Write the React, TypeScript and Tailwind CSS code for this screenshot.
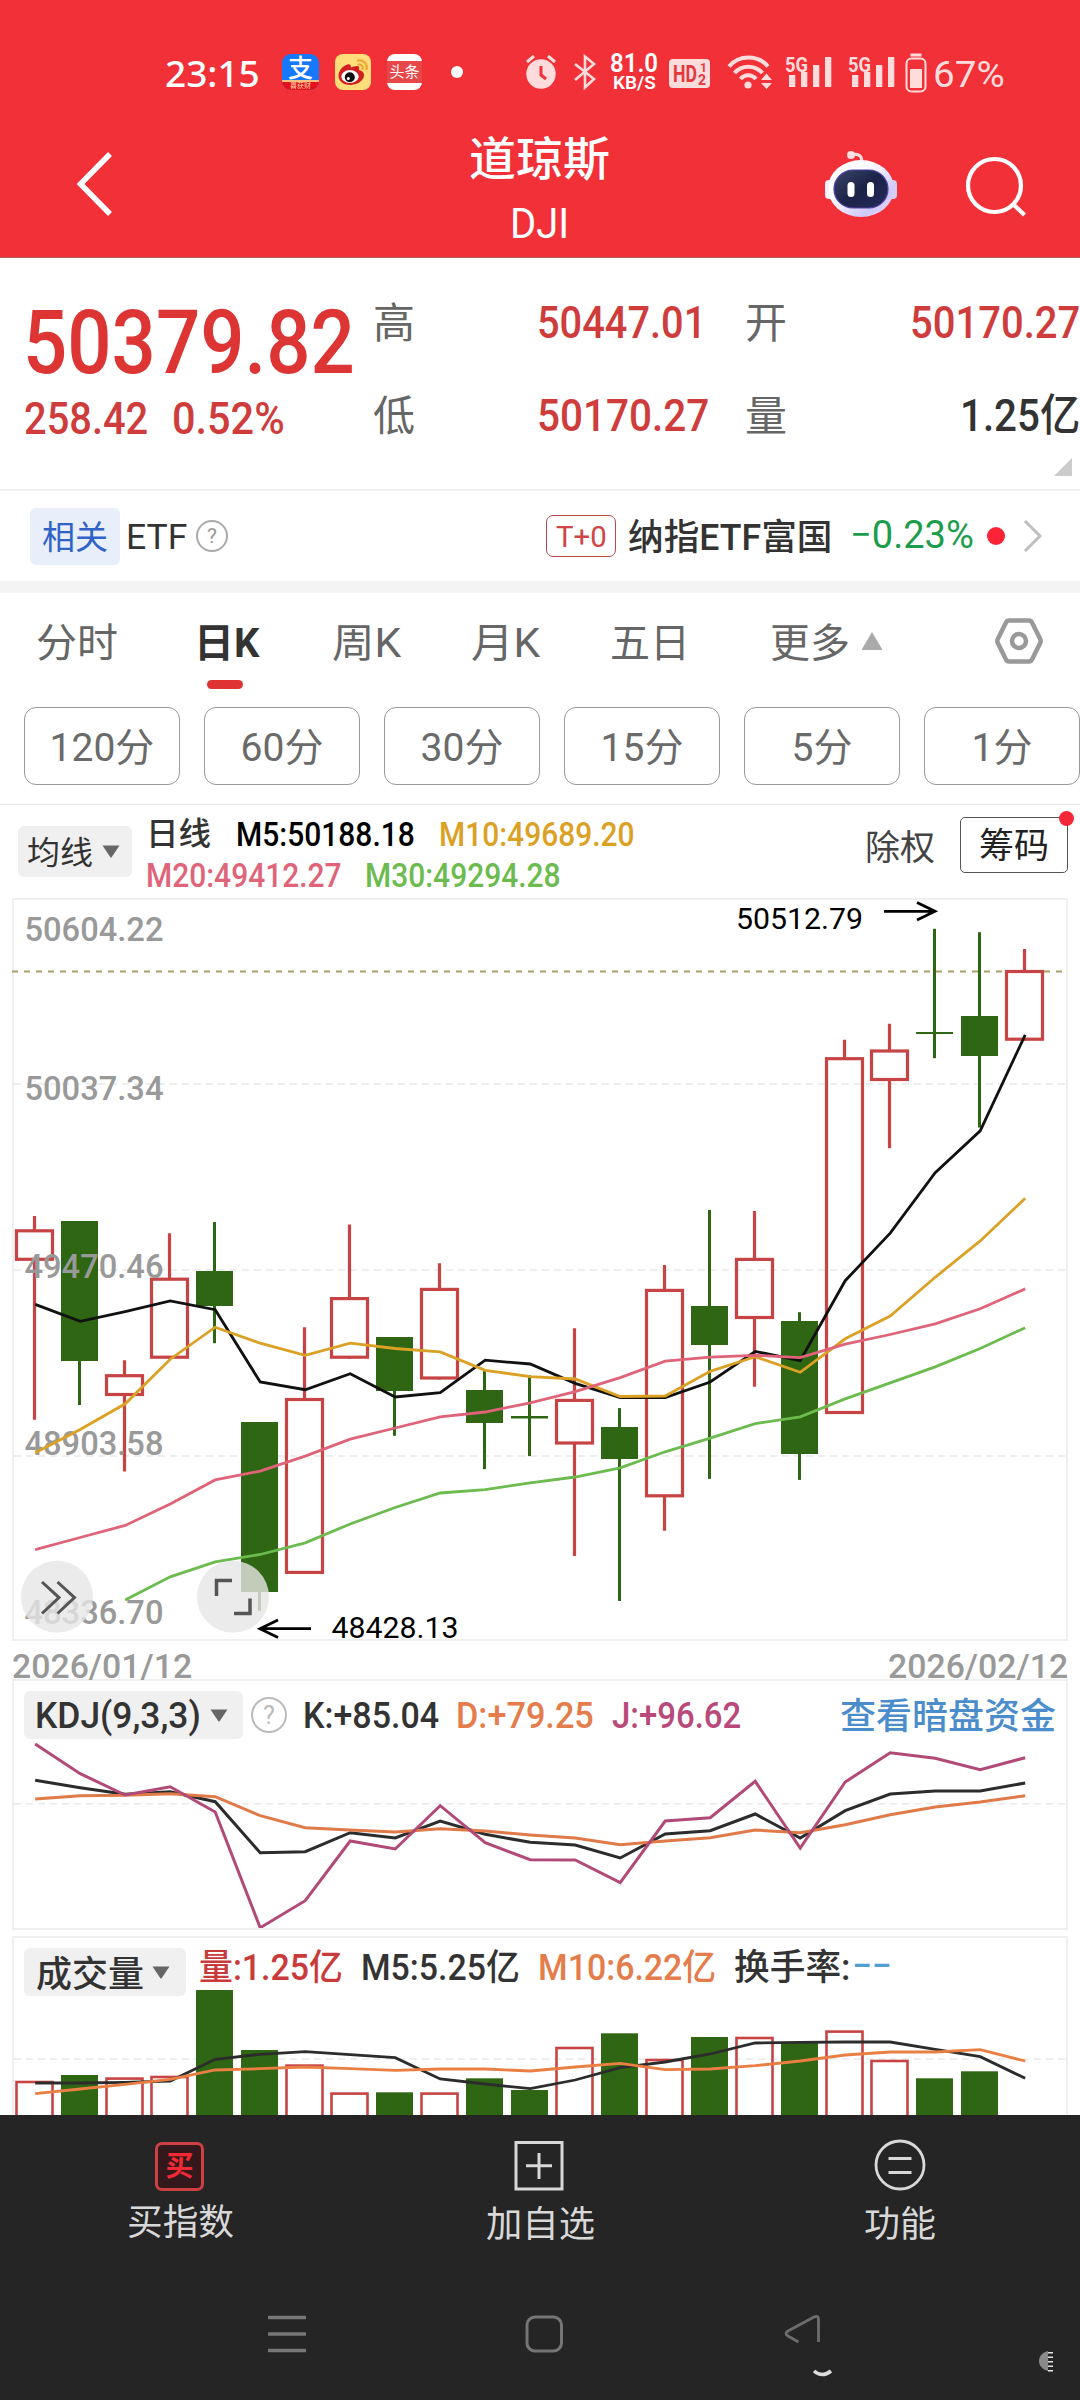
import React, { useLayoutEffect, useRef, useState } from 'react';

interface FitProps {
  w: number;
  className?: string;
  children: React.ReactNode;
}

// Single line label stretched or squeezed to the width of its slot
function Fit({ w, className = '', children }: FitProps) {
  const ref = useRef<HTMLSpanElement>(null);
  const [scale, setScale] = useState(1);

  useLayoutEffect(() => {
    if (ref.current) setScale(w / ref.current.offsetWidth);
  }, [w]);

  return (
    <span className={`inline-block shrink-0 whitespace-nowrap leading-none ${className}`} style={{ width: w }}>
      <span ref={ref} className="inline-block origin-left" style={{ transform: `scaleX(${scale})` }}>
        {children}
      </span>
    </span>
  );
}

const FIRST_X = 34.5;
const STEP = 45;
const RED = '#c64444';
const GREEN = '#2f6613';

interface Candle {
  up: boolean;
  high: number;
  top: number;
  bottom: number;
  low: number;
}

const candles: Candle[] = [
  { up: true, high: 1216, top: 1229.3, bottom: 1260.8, low: 1419.8 },
  { up: false, high: 1221, top: 1221, bottom: 1361, low: 1405 },
  { up: true, high: 1360.2, top: 1374.2, bottom: 1396, low: 1471.6 },
  { up: true, high: 1233.2, top: 1277.7, bottom: 1358.7, low: 1358.7 },
  { up: false, high: 1222, top: 1271, bottom: 1306, low: 1343.2 },
  { up: false, high: 1422, top: 1422, bottom: 1592, low: 1610.7 },
  { up: true, high: 1327.2, top: 1398, bottom: 1573.9, low: 1573.9 },
  { up: true, high: 1224.4, top: 1297.1, bottom: 1358.7, low: 1358.7 },
  { up: false, high: 1337, top: 1337, bottom: 1391, low: 1435.8 },
  { up: true, high: 1263.2, top: 1287.9, bottom: 1379.5, low: 1379.5 },
  { up: false, high: 1370.8, top: 1390, bottom: 1423, low: 1469.2 },
  { up: false, high: 1375.2, top: 1416, bottom: 1418.5, low: 1456.1 },
  { up: true, high: 1328.2, top: 1398.9, bottom: 1444.5, low: 1556 },
  { up: false, high: 1408.1, top: 1427, bottom: 1459, low: 1601 },
  { up: true, high: 1265.1, top: 1288.9, bottom: 1497.3, low: 1530.8 },
  { up: false, high: 1209.9, top: 1306, bottom: 1345, low: 1478.9 },
  { up: true, high: 1210.9, top: 1257.9, bottom: 1319, low: 1386.8 },
  { up: false, high: 1312.2, top: 1321, bottom: 1454, low: 1479.9 },
  { up: true, high: 1039.8, top: 1057.2, bottom: 1414, low: 1414 },
  { up: true, high: 1023.8, top: 1049.5, bottom: 1081, low: 1148.3 },
  { up: false, high: 928.8, top: 1032, bottom: 1034, low: 1058.2 },
  { up: false, high: 932.2, top: 1016, bottom: 1056, low: 1127.5 },
  { up: true, high: 949.1, top: 970, bottom: 1040.7, low: 1040.7 },
];

const ma5 = [1304.4, 1321.4, 1311.7, 1301, 1309.7, 1382, 1389.7, 1373.7, 1397, 1392.6, 1360.2, 1364, 1383.4, 1397.5, 1397.5, 1382, 1351.4, 1360.6, 1280.7, 1233.2, 1172.6, 1130.9, 1034.9];
const ma10 = [1452.7, 1429.5, 1403.8, 1359.2, 1327.2, 1343.2, 1355.3, 1343.2, 1348.5, 1351.9, 1370.3, 1376.6, 1379, 1396.5, 1396, 1371.3, 1356.7, 1372.3, 1338.8, 1316, 1277.3, 1240.9, 1198.3];
const ma20 = [1549.7, 1537.5, 1525.4, 1504.1, 1479.9, 1471.1, 1456.1, 1439.2, 1428, 1416.9, 1412, 1402.8, 1391.7, 1377.6, 1361.1, 1357.2, 1355.3, 1357.7, 1344.2, 1334.5, 1323.8, 1308.8, 1288.9];
const ma30 = [1600.1, 1576.8, 1561.8, 1554.5, 1542.9, 1524, 1507.5, 1493, 1489.6, 1482.8, 1477, 1467.8, 1451.8, 1438.2, 1423.6, 1416.9, 1398.9, 1382.9, 1366.9, 1348.5, 1327.7];

const kLine = [1780.3, 1787.7, 1794.3, 1791.7, 1801.7, 1852.7, 1851.7, 1832.7, 1838, 1821, 1834.3, 1842.3, 1845, 1858, 1834, 1830.7, 1814, 1838, 1810.7, 1794, 1791, 1791, 1783];
const dLine = [1799, 1795.7, 1795.3, 1793.7, 1796.7, 1815.7, 1827.7, 1830, 1832, 1828.7, 1831, 1835, 1838, 1844.7, 1841, 1837.7, 1830, 1832.7, 1824.7, 1814.7, 1807, 1802, 1795.7];
const jLine = [1744, 1773.7, 1795, 1786.7, 1812, 1927.7, 1900.7, 1841, 1849, 1805.7, 1842.7, 1859.7, 1860, 1882.7, 1821, 1817.7, 1781.3, 1848, 1782, 1752.7, 1758.3, 1769.7, 1757.7];

const volumes = [2080.7, 2075, 2077.3, 2075.7, 1990, 2050, 2064.3, 2092.3, 2092.3, 2092.3, 2078.3, 2090, 2046.7, 2033.3, 2058.7, 2037, 2036.7, 2042.3, 2030.3, 2059.7, 2078.3, 2071.3];
const vol5 = [2083, 2083, 2082.3, 2081, 2059.3, 2054.3, 2051.7, 2054.7, 2057.7, 2079, 2084, 2088.7, 2080, 2067.7, 2062, 2054, 2043, 2042.3, 2042, 2042, 2049.3, 2056.7, 2078.3];
const vol10 = [2093.7, 2089, 2084.3, 2079.3, 2070, 2068.7, 2067, 2068.7, 2070.3, 2069, 2069, 2071, 2067, 2063.3, 2069.7, 2069, 2065.7, 2061, 2055, 2052, 2052, 2049.7, 2061];

const priceLabels = [
  { y: 941, text: '50604.22' },
  { y: 1100, text: '50037.34' },
  { y: 1278, text: '49470.46' },
  { y: 1455, text: '48903.58' },
  { y: 1623.5, text: '48336.70' },
];

const tabs = [
  { label: '分时', w: 82, ml: 0 },
  { label: '日K', w: 65, ml: 76, active: true },
  { label: '周K', w: 69, ml: 73 },
  { label: '月K', w: 69, ml: 70 },
  { label: '五日', w: 80, ml: 70 },
  { label: '更多', w: 80, ml: 80 },
];

const periods = ['120分', '60分', '30分', '15分', '5分', '1分'];

function Line({ data, color, width = 2, start = 0 }: { data: number[]; color: string; width?: number; start?: number }) {
  const points = data.map((y, i) => `${FIRST_X + 0.7 + (i + start) * STEP},${y}`).join(' ');
  return <polyline points={points} fill="none" stroke={color} strokeWidth={width} />;
}

function GridLine({ y }: { y: number }) {
  return <line x1="14" x2="1066" y1={y} y2={y} stroke="#e9e9e9" strokeWidth="1.5" strokeDasharray="7 5" />;
}

function Caret() {
  return (
    <svg width="18" height="13" viewBox="0 0 18 13" className="shrink-0">
      <path d="M0.500 0.500h17L9.800 12a1 1 0 0 1-1.600 0z" fill="#666" />
    </svg>
  );
}

function Signal() {
  return (
    <svg width="48" height="36" viewBox="0 0 48 36" className="shrink-0" fill="#ffdcdc">
      <text x="0" y="18" fontSize="21" fontWeight="700" fontFamily="Roboto, sans-serif" textLength="23" lengthAdjust="spacingAndGlyphs">5G</text>
      <rect x="4" y="21" width="6.3" height="12" />
      <rect x="16" y="18" width="6.3" height="15" />
      <rect x="28" y="11" width="6.3" height="22" />
      <rect x="40" y="3" width="6.3" height="30" />
    </svg>
  );
}

function StatusBar() {
  return (
    <div className="flex h-[130px] items-center pt-[14px] pl-[165px] text-white">
      <Fit w={95} className="font-['Noto_Sans'] text-[37px] font-medium">23:15</Fit>
      <div className="ml-[22px] flex h-[36px] w-[37px] shrink-0 flex-col overflow-hidden rounded-[9px] bg-[#1677ff]">
        <div className="flex h-[26px] items-center justify-center pt-[3px] text-[25px] leading-none font-medium">支</div>
        <div className="flex h-[10px] items-center justify-center border-t-2 border-[#f8c080] bg-[#e5101c] text-[7px] leading-none text-[#ffd9a8]">喜获财</div>
      </div>
      <svg width="36" height="36" viewBox="0 0 36 36" className="ml-[16px] shrink-0">
        <rect width="36" height="36" rx="8" fill="#ffdd7a" />
        <path d="M3.500 21C4 14 13 8 15.500 11c.8 1 .3 2.500.3 2.500C19 12 23 11 24 13c.6 1 0 3 0 3 3 .5 5 2.500 5 5 0 6-7 10-14 10-6.500 0-12-4-11.500-10z" fill="#d3201f" />
        <ellipse cx="15" cy="22.500" rx="8.700" ry="6.500" fill="#fff" />
        <circle cx="14.800" cy="23.300" r="5" fill="#111" />
        <circle cx="13.300" cy="24.500" r="1.500" fill="#fff" />
        <path d="M23 6.500c6-1 10 4 8.500 9M23.500 10.500c3-.5 5 2 4 4.500" fill="none" stroke="#eda62f" strokeWidth="2.200" strokeLinecap="round" />
      </svg>
      <div className="ml-[16px] flex h-[36px] w-[35px] shrink-0 items-center rounded-[8px] bg-white">
        <div className="flex h-[22px] w-full items-center justify-center bg-[#e8474a] text-[15px] leading-none">头条</div>
      </div>
      <div className="ml-[29px] h-[12px] w-[12px] shrink-0 rounded-full bg-white" />
      <svg width="32" height="36" viewBox="0 0 32 36" className="ml-[62px] shrink-0">
        <circle cx="16" cy="20" r="14.700" fill="#ffdcdc" />
        <path d="M2 8l7-6M30 8l-7-6" stroke="#ffdcdc" strokeWidth="3" />
        <path d="M16 12v9l5 4" fill="none" stroke="#f23037" strokeWidth="3" />
      </svg>
      <svg width="22" height="36" viewBox="0 0 22 36" className="ml-[17px] shrink-0" fill="none" stroke="#ffdcdc" strokeWidth="2.600">
        <path d="M1 10l19 15-9 8.500V2.500L20 10 1 26" />
      </svg>
      <div className="ml-[14px] flex shrink-0 flex-col">
        <Fit w={48} className="text-[25px] leading-[21px]! font-semibold">81.0</Fit>
        <Fit w={43} className="ml-[3px] text-[18px] leading-[17px]! font-semibold">KB/S</Fit>
      </div>
      <svg width="41" height="29" viewBox="0 0 41 29" className="ml-[11px] mt-[2px] shrink-0">
        <rect width="41" height="29" rx="4" fill="#ffdcdc" />
        <g fill="#e5383e" fontFamily="Roboto, sans-serif" fontWeight="700">
          <text x="4" y="23" fontSize="24" textLength="24" lengthAdjust="spacingAndGlyphs">HD</text>
          <text x="31" y="13" fontSize="12">1</text>
          <text x="29" y="26" fontSize="14">2</text>
        </g>
      </svg>
      <svg width="46" height="36" viewBox="0 0 46 36" className="ml-[17px] shrink-0" fill="none" stroke="#ffdcdc" strokeWidth="4">
        <path d="M2 12.500c10-12 29-12 39 0M7.500 19c7-8.500 20.500-8.500 28 0M13.500 25c4-5 11.500-5 15.500 0" />
        <circle cx="21" cy="31" r="3.600" fill="#ffdcdc" stroke="none" />
        <path d="M34 26l5.500-6.500L45 26zM34 29l5.500 6L45 29z" fill="#ffdcdc" stroke="none" />
      </svg>
      <div className="ml-[12px] flex shrink-0"><Signal /></div>
      <div className="ml-[15px] flex shrink-0"><Signal /></div>
      <svg width="22" height="40" viewBox="0 0 22 40" className="ml-[9px] mt-[1px] shrink-0">
        <rect x="5.500" y="0.500" width="11" height="3" fill="#ffdcdc" />
        <rect x="1.500" y="5.500" width="19" height="33" rx="5" fill="none" stroke="#ffdcdc" strokeWidth="2" />
        <rect x="5" y="16" width="12" height="19" fill="#ffdcdc" />
      </svg>
      <Fit w={72} className="ml-[6px] mt-[5px] text-[37px] text-[#ffdcdc]">67%</Fit>
    </div>
  );
}

function Robot() {
  return (
    <svg width="74" height="68" viewBox="0 0 74 68" className="mt-[20px] shrink-0">
      <defs>
        <linearGradient id="shell" x1="0" y1="0" x2="1" y2="1">
          <stop offset="0.35" stopColor="#fff" />
          <stop offset="0.75" stopColor="#cfc9fb" />
          <stop offset="1" stopColor="#f3dcf3" />
        </linearGradient>
        <linearGradient id="visor" x1="0" y1="0" x2="1" y2="1">
          <stop offset="0" stopColor="#3b4668" />
          <stop offset="0.5" stopColor="#1c2348" />
          <stop offset="1" stopColor="#232a5a" />
        </linearGradient>
      </defs>
      <path d="M27 5c6-2 11 0 11 7" fill="none" stroke="#ffdfe2" strokeWidth="3" />
      <circle cx="27" cy="5" r="4" fill="#ffdfe2" />
      <rect x="1" y="30" width="9" height="19" rx="4" fill="#f4f0ff" />
      <rect x="64" y="30" width="9" height="19" rx="4" fill="#d5cdf8" />
      <ellipse cx="37" cy="38.500" rx="33" ry="28.500" fill="url(#shell)" />
      <rect x="10" y="20" width="54" height="38" rx="19" fill="url(#visor)" stroke="#5140a8" strokeWidth="1.200" />
      <rect x="23.500" y="32" width="7" height="15" rx="3.500" fill="#fff" />
      <rect x="43" y="32" width="7" height="15" rx="3.500" fill="#fff" />
    </svg>
  );
}

function Header() {
  return (
    <header className="h-[258px] shrink-0 border-b border-[#b0605f] bg-[#f23037]">
      <StatusBar />
      <div className="flex h-[127px] items-start text-white">
        <svg width="38" height="68" viewBox="0 0 38 68" className="mt-[20px] ml-[75px] shrink-0">
          <path d="M35 4L5.500 34 35 64" fill="none" stroke="#fff" strokeWidth="5.500" />
        </svg>
        <div className="ml-[355px] flex w-[142px] shrink-0 flex-col items-center">
          <Fit w={141} className="mt-[6px] text-[46px] font-medium">道琼斯</Fit>
          <Fit w={59} className="mt-[21px] text-[42px]">DJI</Fit>
        </div>
        <div className="ml-[214px] flex"><Robot /></div>
        <svg width="66" height="66" viewBox="0 0 66 66" className="mt-[24px] ml-[64px] shrink-0" fill="none" stroke="#fff" strokeWidth="4.200">
          <circle cx="32.500" cy="31.500" r="26.500" />
          <path d="M51.500 50.500l11 10.500" />
        </svg>
      </div>
    </header>
  );
}

function QuotePanel() {
  return (
    <section className="flex h-[233px] shrink-0 border-b-2 border-[#f0f0f0] font-medium text-[#cf3c3c]">
      <div className="w-[373px] pt-[40px] pl-[23px]">
        <Fit w={332} className="text-[89px] text-[#dd3434]">50379.82</Fit>
        <div className="mt-[10px] ml-px flex">
          <Fit w={124} className="text-[44px]">258.42</Fit>
          <Fit w={113} className="ml-[24px] text-[44px]">0.52%</Fit>
        </div>
      </div>
      <div className="grid h-[204px] w-[336px] grid-cols-[42px_1fr] grid-rows-2 items-center pt-[18px]">
        <span className="pt-[3px] text-[42px] leading-none font-normal text-[#666]">高</span>
        <Fit w={169} className="mr-[3px] justify-self-end text-[44px]">50447.01</Fit>
        <span className="pt-[3px] text-[42px] leading-none font-normal text-[#666]">低</span>
        <Fit w={172} className="justify-self-end text-[44px]">50170.27</Fit>
      </div>
      <div className="w-[371px]">
        <div className="grid h-[204px] grid-cols-[42px_1fr] grid-rows-2 items-center pt-[18px] pl-[36px]">
          <span className="pt-[3px] text-[42px] leading-none font-normal text-[#666]">开</span>
          <Fit w={170} className="justify-self-end text-[44px]">50170.27</Fit>
          <span className="pt-[3px] text-[42px] leading-none font-normal text-[#666]">量</span>
          <Fit w={120} className="justify-self-end text-[44px] text-[#333]">1.25亿</Fit>
        </div>
        <svg width="18" height="18" viewBox="0 0 18 18" className="-mt-[4px] ml-[345px]">
          <path d="M18 0v18H0z" fill="#ccc" />
        </svg>
      </div>
    </section>
  );
}

function EtfRow() {
  return (
    <section className="flex h-[90px] shrink-0 items-center pl-[30px] text-[#333]">
      <div className="flex h-[57px] w-[90px] shrink-0 items-center justify-center rounded-[6px] bg-[#e9eefb] text-[#2f63c8]">
        <Fit w={66} className="mt-[3px] text-[33px]">相关</Fit>
      </div>
      <Fit w={61} className="mt-[3px] ml-[6px] text-[35px]">ETF</Fit>
      <div className="ml-[9px] flex h-[32px] w-[32px] shrink-0 items-center justify-center rounded-full border-2 border-[#aaa] text-[21px] leading-none text-[#999]">?</div>
      <div className="ml-[318px] flex h-[42px] w-[70px] shrink-0 items-center justify-center rounded-[7px] border border-[#b84a4a] text-[#d04545]">
        <Fit w={51} className="mt-[2px] text-[30px]">T+0</Fit>
      </div>
      <Fit w={204} className="mt-[3px] ml-[12px] text-[36px] font-medium">纳指ETF富国</Fit>
      <Fit w={124} className="-mt-[2px] ml-[18px] text-[39px] text-[#1c9d4c]">−0.23%</Fit>
      <div className="ml-[13px] h-[18px] w-[18px] shrink-0 rounded-full bg-[#fa2436]" />
      <svg width="22" height="34" viewBox="0 0 22 34" className="ml-[17px] shrink-0">
        <path d="M3 2l15 15L3 32" fill="none" stroke="#bfbfbf" strokeWidth="3" />
      </svg>
    </section>
  );
}

function Tabs() {
  return (
    <nav className="flex h-[96px] shrink-0 items-center pl-[36px] text-[#666]">
      {tabs.map((tab) => (
        <div key={tab.label} className="relative flex shrink-0 pt-[5px]" style={{ marginLeft: tab.ml }}>
          <Fit w={tab.w} className={tab.active ? 'text-[40px] font-bold text-[#333]' : 'text-[40px]'}>{tab.label}</Fit>
          {tab.active && <span className="absolute top-[61px] left-[13px] h-[9px] w-[36px] rounded-full bg-[#df3333]" />}
        </div>
      ))}
      <svg width="24" height="20" viewBox="0 0 24 20" className="ml-[10px] shrink-0">
        <path d="M12 1l10 17a.6.6 0 0 1-.5 1h-19a.6.6 0 0 1-.5-1z" fill="#aaa" />
      </svg>
      <svg width="50" height="48" viewBox="0 0 50 48" className="ml-[110px] shrink-0" fill="none" stroke="#999">
        <path d="M15 3.500h20q2 0 3 2l8.200 16.500q1 2 0 4L38 42.500q-1 2-3 2H15q-2 0-3-2L3.800 26q-1-2 0-4L12 5.500q1-2 3-2z" strokeWidth="4.500" />
        <circle cx="25" cy="24" r="7" strokeWidth="4.500" />
      </svg>
    </nav>
  );
}

function Periods() {
  return (
    <div className="flex h-[116px] shrink-0 gap-[24px] border-b border-[#e6e6e6] pt-[18px] pl-[24px]">
      {periods.map((p) => (
        <button key={p} className="flex h-[78px] w-[156px] shrink-0 items-center justify-center rounded-[12px] border border-[#999] pt-[5px] text-[39px] leading-none text-[#6a6a6a]">
          {p}
        </button>
      ))}
    </div>
  );
}

function MaBar() {
  return (
    <div className="flex h-[93px] shrink-0 pl-[18px]">
      <div className="mt-[21px] flex h-[51px] w-[114px] shrink-0 items-center rounded-[6px] bg-[#f0f0f0] pl-[9px] text-[#333]">
        <Fit w={66} className="mt-[3px] text-[32px]">均线</Fit>
        <span className="ml-[9px]"><Caret /></span>
      </div>
      <div className="ml-[14px] w-[720px] shrink-0 pt-[13px] font-medium">
        <div className="flex">
          <Fit w={65} className="text-[32px] text-[#333]">日线</Fit>
          <Fit w={179} className="ml-[25px] text-[33px] text-black">M5:50188.18</Fit>
          <Fit w={196} className="ml-[24px] text-[33px] text-[#dba125]">M10:49689.20</Fit>
        </div>
        <div className="mt-[8px] flex">
          <Fit w={196} className="text-[33px] text-[#df6479]">M20:49412.27</Fit>
          <Fit w={196} className="ml-[23px] text-[33px] text-[#6cbb4f]">M30:49294.28</Fit>
        </div>
      </div>
      <Fit w={70} className="mt-[26px] -ml-px text-[35px] text-[#444]">除权</Fit>
      <div className="relative mt-[12px] ml-[25px] flex h-[56px] w-[108px] shrink-0 items-center justify-center rounded-[5px] border border-[#555] text-[#222]">
        <Fit w={70} className="mt-[3px] text-[35px]">筹码</Fit>
        <span className="absolute -top-[7px] -right-[7px] h-[15px] w-[15px] rounded-full bg-[#f5283a]" />
      </div>
    </div>
  );
}

function CandleShape({ c, x }: { c: Candle; x: number }) {
  if (c.up) {
    return (
      <g stroke={RED} strokeWidth="3.200" fill="none">
        <path d={`M${x} ${c.high}V${c.top + 1}M${x} ${c.bottom - 1}V${c.low}`} />
        <rect x={x - 18} y={c.top + 1.5} width={36} height={c.bottom - c.top - 3} />
      </g>
    );
  }
  return (
    <g fill={GREEN}>
      <rect x={x - 1.5} y={c.high} width={3} height={c.low - c.high} />
      <rect x={x - 18.5} y={c.top} width={37} height={c.bottom - c.top} />
    </g>
  );
}

function PriceChart() {
  return (
    <div className="mx-[12px] h-[743px] shrink-0 border-2 border-[#efefef]">
      <svg width="1052" height="739" viewBox="14 900 1052 739" fontFamily="Roboto, sans-serif" className="block overflow-visible">
        {[1084, 1270, 1456].map((y) => <GridLine key={y} y={y} />)}
        <line x1="12" x2="1064" y1="971.5" y2="971.5" stroke="#a89f68" strokeWidth="1.800" strokeDasharray="6 6" />
        {candles.map((c, i) => <CandleShape key={i} c={c} x={FIRST_X + i * STEP} />)}
        <g fill="#999" fontSize="33" fontWeight="500">
          {priceLabels.map((l) => (
            <text key={l.text} x="24.500" y={l.y} textLength="139" lengthAdjust="spacingAndGlyphs">{l.text}</text>
          ))}
        </g>
        <Line data={ma5} color="#111" width={2.8} />
        <Line data={ma10} color="#dba125" width={2.8} />
        <Line data={ma20} color="#df6479" width={2.8} />
        <Line data={ma30} color="#6cbb4f" width={2.8} start={2} />

        {/* period high / low markers */}
        <g fill="#000" fontSize="29">
          <text x="736" y="928.500" textLength="127" lengthAdjust="spacingAndGlyphs">50512.79</text>
          <text x="331.500" y="1637.500" textLength="127" lengthAdjust="spacingAndGlyphs">48428.13</text>
        </g>
        <g fill="none" stroke="#000" strokeWidth="2.800">
          <path d="M884 911.300h50M917 902.500l18 8.800-18 8.800" />
          <path d="M311 1628.700h-50M278 1620l-18 8.700 18 8.700" />
        </g>

        {/* floating chart buttons */}
        <circle cx="57" cy="1596.700" r="36" fill="#e6e6e6" fillOpacity="0.8" />
        <circle cx="233" cy="1596.700" r="36" fill="#e6e6e6" fillOpacity="0.8" />
        <g fill="none" stroke="#555" strokeWidth="3">
          <path d="M42 1582l17 15.600L42 1613.500M57.500 1582l17 15.600-17 15.900" />
          <path d="M232 1580.500h-15.500V1596M234 1613.500h16V1598.500" strokeWidth="3.500" />
        </g>
      </svg>
    </div>
  );
}

function Dates() {
  return (
    <div className="flex h-[38px] shrink-0 justify-between px-[12px] pt-[8px] font-medium text-[#999]">
      <Fit w={180} className="text-[34px] leading-[34px]!">2026/01/12</Fit>
      <Fit w={180} className="text-[34px] leading-[34px]!">2026/02/12</Fit>
    </div>
  );
}

function KdjPanel() {
  return (
    <div className="mx-[12px] h-[251px] shrink-0 border-2 border-[#efefef]">
      <div className="flex h-[58px] items-center pl-[10px] font-medium text-[#333]">
        <div className="mt-[10px] flex h-[48px] w-[219px] shrink-0 items-center rounded-[6px] bg-[#f0f0f0] pl-[11px]">
          <Fit w={166} className="mt-[2px] text-[36px]">KDJ(9,3,3)</Fit>
          <span className="ml-[9px]"><Caret /></span>
        </div>
        <div className="mt-[10px] ml-[8px] flex h-[36px] w-[36px] shrink-0 items-center justify-center rounded-full border-2 border-[#bbb] text-[25px] leading-none font-normal text-[#bbb]">?</div>
        <Fit w={136} className="mt-[12px] ml-[16px] text-[36px]">K:+85.04</Fit>
        <Fit w={138} className="mt-[12px] ml-[17px] text-[36px] text-[#e47c4b]">D:+79.25</Fit>
        <Fit w={129} className="mt-[12px] ml-[18px] text-[36px] text-[#b8497a]">J:+96.62</Fit>
        <Fit w={216} className="mt-[13px] ml-[99px] text-[36px] text-[#4b8ccb]">查看暗盘资金</Fit>
      </div>
      <svg width="1052" height="189" viewBox="14 1739 1052 189" className="block">
        <GridLine y={1803.7} />
        <Line data={kLine} color="#2c2c2c" width={3} />
        <Line data={dLine} color="#e07a48" width={3} />
        <Line data={jLine} color="#b24a78" width={3} />
      </svg>
    </div>
  );
}

function VolumePanel() {
  return (
    <div className="mx-[12px] mt-[6px] h-[179px] shrink-0 overflow-hidden border-2 border-b-0 border-[#efefef]">
      <div className="flex h-[50px] pl-[10px] font-medium text-[#333]">
        <div className="mt-[10px] flex h-[48px] w-[162px] shrink-0 items-center rounded-[6px] bg-[#f0f0f0] pl-[12px]">
          <Fit w={108} className="mt-[5px] text-[36px]">成交量</Fit>
          <span className="ml-[8px]"><Caret /></span>
        </div>
        <Fit w={144} className="mt-[12px] ml-[13px] text-[36px] text-[#c93b3b]">量:1.25亿</Fit>
        <Fit w={159} className="mt-[12px] ml-[18px] text-[36px]">M5:5.25亿</Fit>
        <Fit w={178} className="mt-[12px] ml-[18px] text-[36px] text-[#e47c4b]">M10:6.22亿</Fit>
        <Fit w={117} className="mt-[12px] ml-[18px] text-[36px]">换手率:</Fit>
        <Fit w={40} className="mt-[10px] ml-px text-[36px] text-[#4fa0d0]">−−</Fit>
      </div>
      <svg width="1052" height="127" viewBox="14 1988 1052 127" className="block">
        <GridLine y={2059} />
        {volumes.map((top, i) => {
          const x = FIRST_X + i * STEP;
          return candles[i].up
            ? <rect key={i} x={x - 18} y={top + 1.3} width={36} height={200} fill="none" stroke={RED} strokeWidth="2.600" />
            : <rect key={i} x={x - 18.5} y={top} width={37} height={200} fill={GREEN} />;
        })}
        <Line data={vol5} color="#2c2c2c" width={2.8} />
        <Line data={vol10} color="#ea7f43" width={2.8} />
      </svg>
    </div>
  );
}

function BottomNav() {
  return (
    <footer className="h-[285px] shrink-0 bg-[#252525] text-[#d8d8d8]">
      <div className="grid h-[180px] grid-cols-3">
        <div className="flex flex-col items-center pt-[27px]">
          <div className="-ml-px flex h-[49px] w-[49px] items-center justify-center rounded-[7px] border-3 border-[#cd4145] bg-[#33191b] text-[28px] leading-none font-bold text-[#f32a36]">买</div>
          <Fit w={107} className="mt-[14px] text-[36px]">买指数</Fit>
        </div>
        <div className="flex flex-col items-center pt-[26px]">
          <svg width="50" height="50" viewBox="0 0 50 50" fill="none" stroke="#d8d8d8" strokeWidth="3" className="-ml-[2px]">
            <rect x="2" y="1.500" width="46" height="46.500" />
            <path d="M12 24.700h26M25 12v26" />
          </svg>
          <Fit w={109} className="mt-[16px] text-[36px]">加自选</Fit>
        </div>
        <div className="flex flex-col items-center pt-[24px]">
          <svg width="52" height="52" viewBox="0 0 52 52" fill="none" stroke="#d8d8d8" strokeWidth="2.800">
            <circle cx="26" cy="26" r="24" />
            <path d="M14.500 19.500h23M14.500 33.500h23" />
          </svg>
          <Fit w={72} className="mt-[16px] text-[36px]">功能</Fit>
        </div>
      </div>
      <div className="flex pt-[19px] pl-[268px]">
        <svg width="38" height="40" viewBox="0 0 38 40" className="shrink-0">
          <path d="M1 3.500h36M1 20h36M1 36.500h36" stroke="#777" strokeWidth="3.300" strokeLinecap="round" />
        </svg>
        <svg width="38" height="40" viewBox="0 0 38 40" className="ml-[219px] shrink-0">
          <rect x="2" y="3" width="34.500" height="34" rx="8" fill="none" stroke="#757575" strokeWidth="3" />
        </svg>
        <svg width="280" height="64" viewBox="780 2314 280 64" className="ml-[217px] shrink-0">
          <path d="M798.500 2342l-10.500-6q-4-2.500 0-5l26-14q4.500-2 4.500 2V2342" fill="none" stroke="#6d6d6d" strokeWidth="2.800" />
          <path d="M814 2371q8 7 17 0" fill="none" stroke="#ddd" strokeWidth="3.500" />
          <path d="M1048 2351c-12 3-12 17 0 20z" fill="#8a8a8a" />
          <path d="M1050.500 2352v22" stroke="#e5e5e5" strokeWidth="5" strokeDasharray="1.500 3" />
        </svg>
      </div>
    </footer>
  );
}

export default function App() {
  return (
    <div className="flex h-[2400px] w-[1080px] flex-col overflow-hidden bg-white font-[Roboto,'Noto_Sans_CJK_SC',sans-serif]">
      <Header />
      <QuotePanel />
      <EtfRow />
      <div className="h-[12px] shrink-0 bg-[#f4f4f4]" />
      <Tabs />
      <Periods />
      <MaBar />
      <PriceChart />
      <Dates />
      <KdjPanel />
      <VolumePanel />
      <BottomNav />
    </div>
  );
}
